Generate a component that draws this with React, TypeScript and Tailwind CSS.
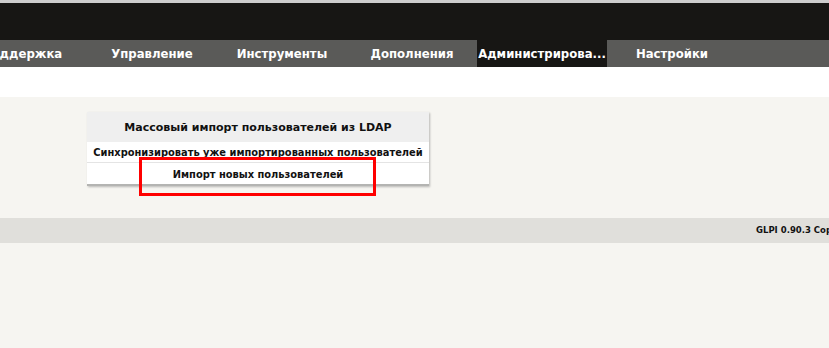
import React from 'react'

const menu = [
  { label: 'Поддержка' },
  { label: 'Управление' },
  { label: 'Инструменты' },
  { label: 'Дополнения' },
  { label: 'Администрирова...', active: true },
  { label: 'Настройки' },
]

export default function App() {
  return (
    <div className="w-[829px] h-[348px] overflow-hidden bg-[#f6f5f1] font-['DejaVu_Sans',Verdana,sans-serif]">
      <div className="h-[3px] bg-[#cdcdcd]" />
      <div className="h-[37px] bg-[#171614]" />

      <nav className="h-[27px] bg-[#5a5a58] flex ml-[-43px]">
        {menu.map((m) => (
          <div
            key={m.label}
            className={`w-[130px] shrink-0 flex items-center justify-center whitespace-nowrap text-white text-[11.7px] font-bold pt-[3px] ${
              m.active ? 'bg-[#171614]' : ''
            }`}
          >
            {m.label}
          </div>
        ))}
      </nav>

      <div className="h-[30px] bg-white" />

      <div className="pt-[15px] pl-[87px]">
        <div className="relative w-[342px] bg-white border-b-2 border-[#b4b4b2] shadow-[1px_1px_2px_rgba(0,0,0,0.25)]">
          <div className="h-[30px] bg-[#efefef] flex items-center justify-center pt-[2px] text-[11px] font-bold text-[#111]">
            Массовый импорт пользователей из LDAP
          </div>
          <div className="h-[21px] border-b border-[#e4e4e4] flex items-center justify-center pt-[3px] whitespace-nowrap text-[9.9px] font-bold text-[#111]">
            Синхронизировать уже импортированных пользователей
          </div>
          <div className="h-[21px] flex items-center justify-center pt-[4px] text-[9.9px] font-bold text-[#111]">
            Импорт новых пользователей
          </div>
          <div className="absolute left-[52px] top-[45px] w-[237px] h-[39px] border-[3px] border-[#ff0000]" />
        </div>
      </div>

      <footer className="mt-[32px] h-[25px] bg-[#e0dfdb] flex items-center justify-start pl-[756px] whitespace-nowrap text-[8.5px] font-bold text-[#111]">
        GLPI 0.90.3 Copyright (C) 2015-2016 By GLPI Team
      </footer>
    </div>
  )
}
